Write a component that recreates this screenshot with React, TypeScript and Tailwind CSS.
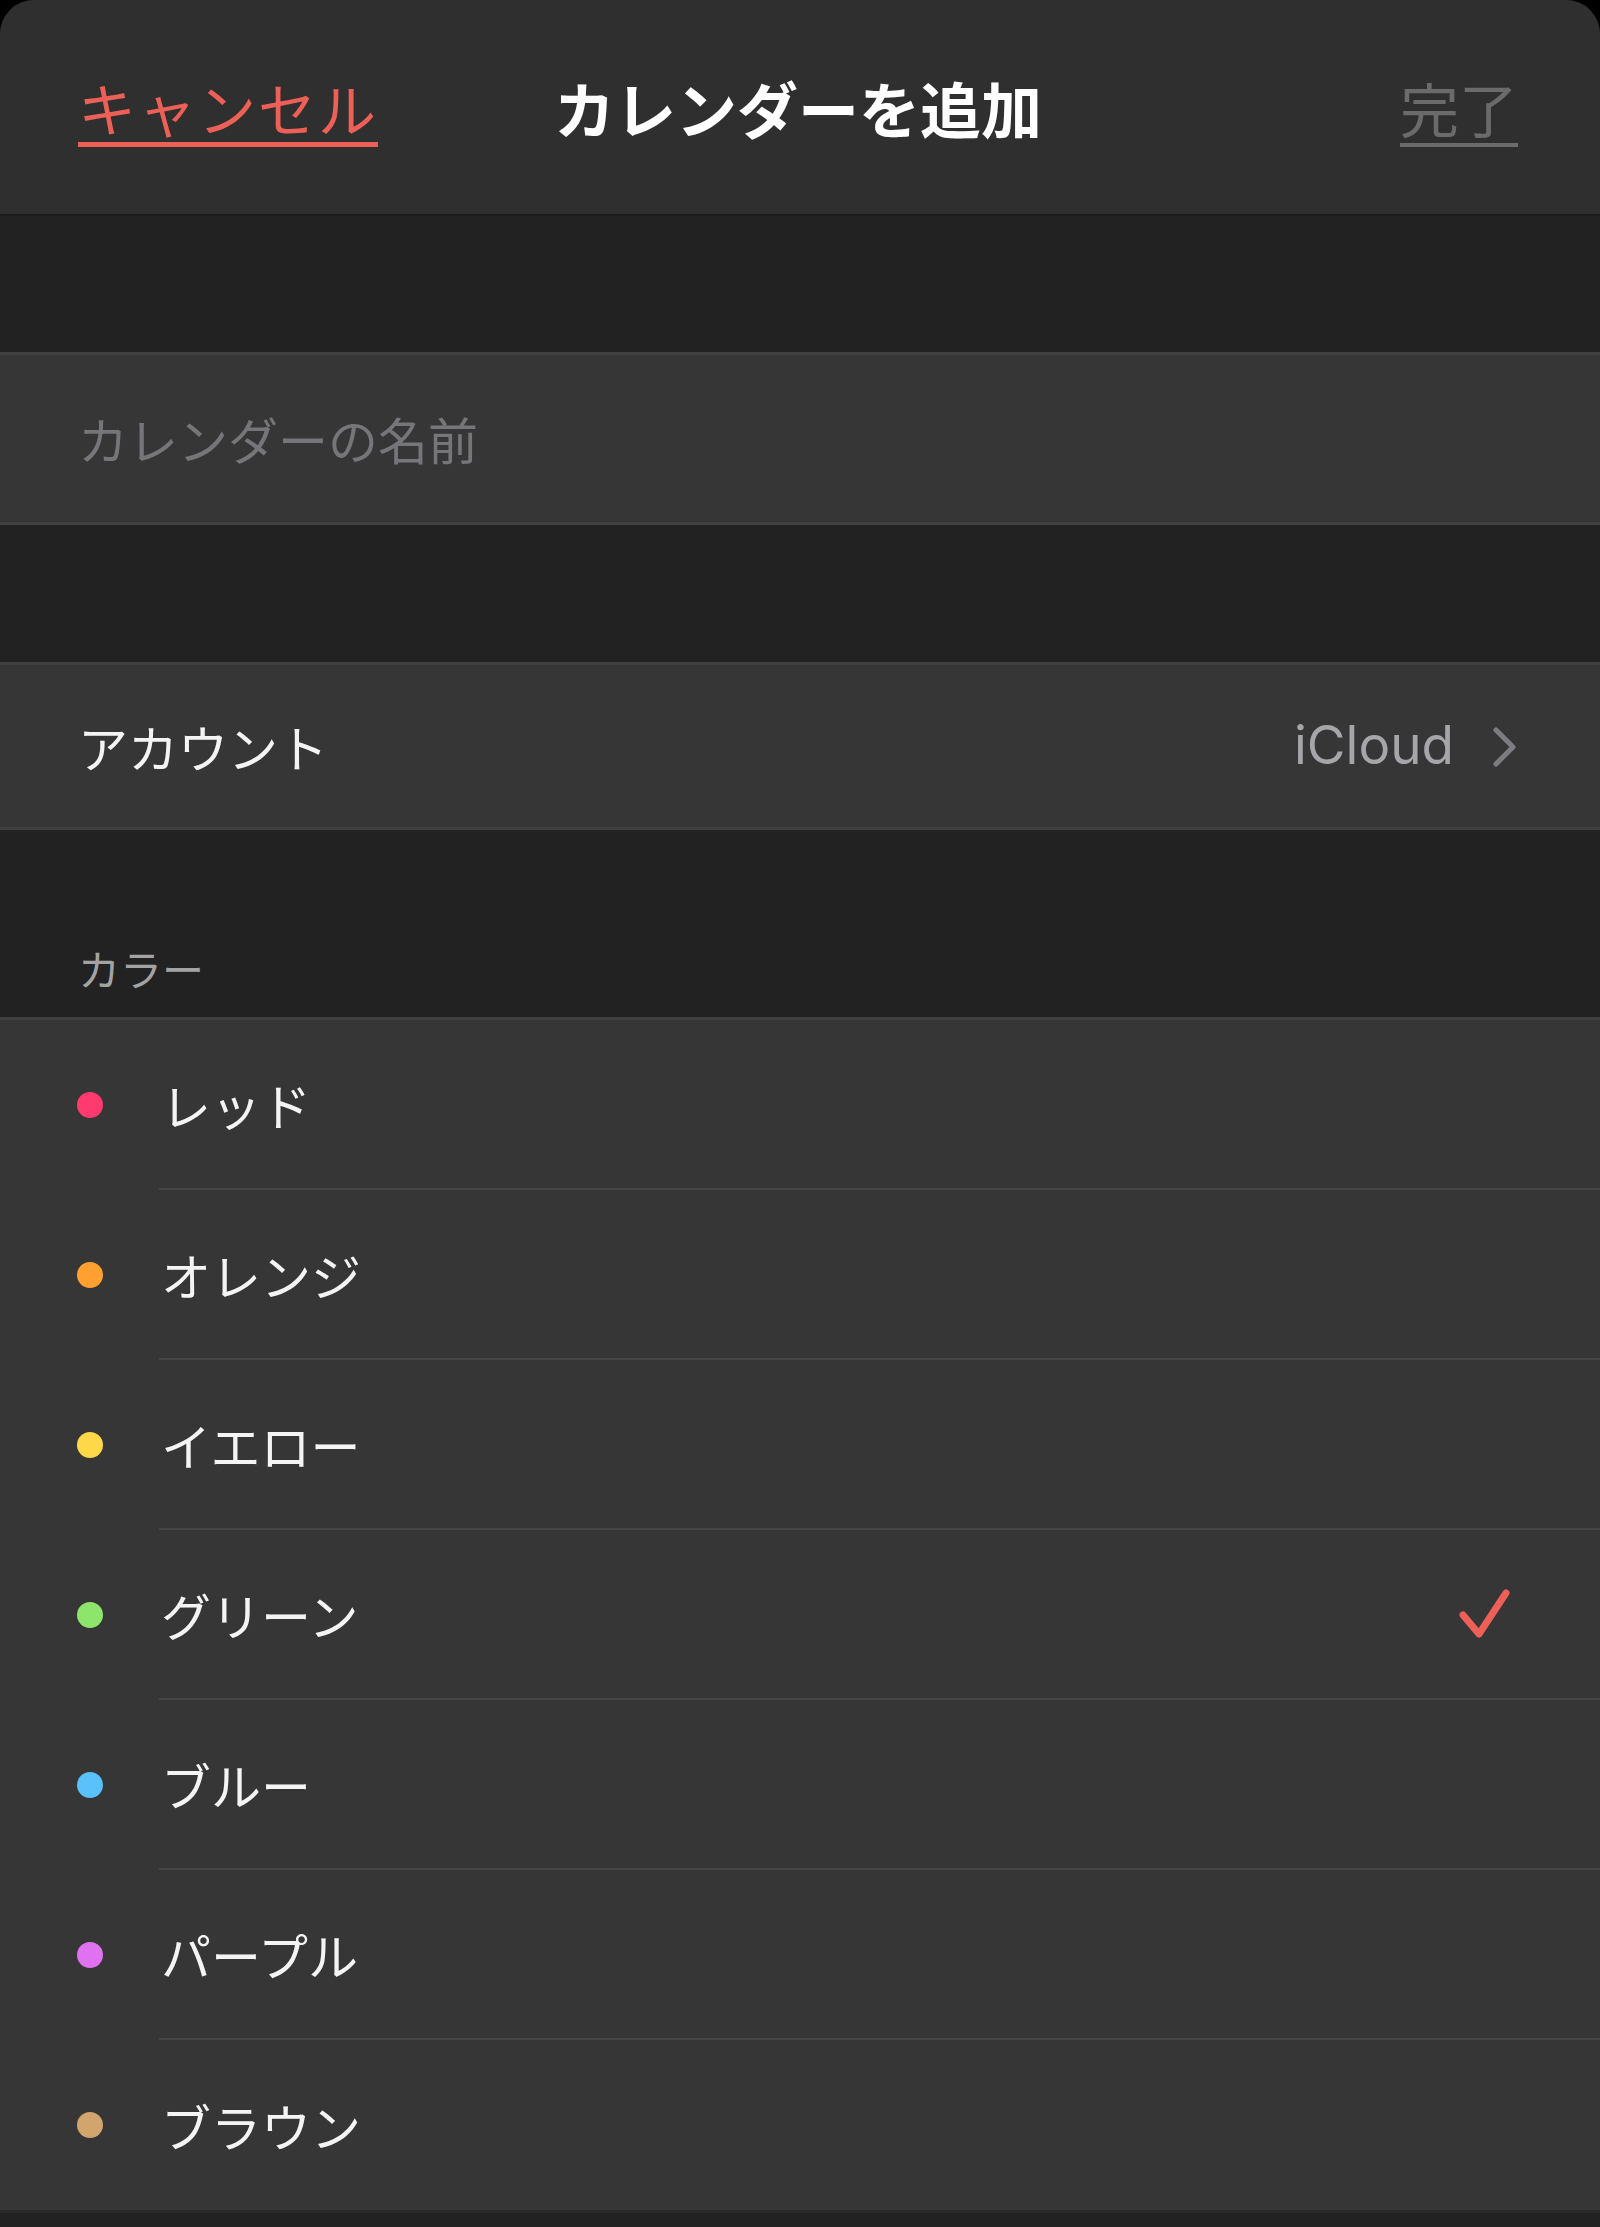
import React from "react";

const colors = [
  { name: "レッド", color: "#ff3a6e" },
  { name: "オレンジ", color: "#ffa030" },
  { name: "イエロー", color: "#ffd84a" },
  { name: "グリーン", color: "#8de56c", checked: true },
  { name: "ブルー", color: "#5ac1fa" },
  { name: "パープル", color: "#e072f2" },
  { name: "ブラウン", color: "#d2a46e" },
];

const jp = { fontFamily: '"Noto Sans CJK JP", "Noto Sans", sans-serif' };

export default function App() {
  return (
    <div className="w-[1600px] h-[2227px] bg-black overflow-hidden" style={jp}>
      <div className="h-full rounded-t-[34px] overflow-hidden bg-[#222222] flex flex-col">
        {/* Header */}
        <div className="h-[216px] shrink-0 bg-[#2f2f2f] border-b-2 border-[#1d1d1d] flex items-center pl-[78px] pr-[82px]">
          <div className="flex-1 flex justify-start">
            <span className="text-[58px] leading-none text-[#ec6058] underline decoration-[5px] underline-offset-[10px] tracking-[2px]">
              キャンセル
            </span>
          </div>
          <span className="text-[61px] leading-none font-bold text-white">
            カレンダーを追加
          </span>
          <div className="flex-1 flex justify-end">
            <span className="text-[59px] leading-none text-[#6b6b6b] underline decoration-[4px] underline-offset-[10px]">
              完了
            </span>
          </div>
        </div>

        {/* gap */}
        <div className="h-[136px] shrink-0 bg-[#222222]" />

        {/* text field */}
        <div className="h-[173px] shrink-0 bg-[#363636] border-y-[3px] border-[#404040] flex items-center px-[78px]">
          <span className="text-[50px] text-[#76767a]">カレンダーの名前</span>
        </div>

        <div className="h-[137px] shrink-0 bg-[#222222]" />

        {/* account */}
        <div className="h-[168px] shrink-0 bg-[#363636] border-y-[3px] border-[#404040] flex items-center justify-between pl-[78px] pr-[82px]">
          <span className="text-[50px] text-[#f4f4f4]">アカウント</span>
          <div className="flex items-center gap-[38px]">
            <span
              className="text-[53px] text-[#a6a6aa]"
              style={{ fontFamily: 'Inter, "Noto Sans", sans-serif' }}
            >
              iCloud
            </span>
            <svg width="26" height="40" viewBox="0 0 26 40" className="mt-[2px]">
              <path
                d="M4 3 L21 20 L4 37"
                fill="none"
                stroke="#7d7d81"
                strokeWidth="5"
                strokeLinecap="round"
                strokeLinejoin="round"
              />
            </svg>
          </div>
        </div>

        {/* section header */}
        <div className="h-[190px] shrink-0 bg-[#222222] flex items-end px-[78px] pb-[18px] border-b-[3px] border-[#404040]">
          <span className="text-[42px] text-[#a3a3a3]">カラー</span>
        </div>

        {/* color rows */}
        <div className="bg-[#363636] flex flex-col">
          {colors.map((c, i) => (
            <div key={c.name} className="h-[170px] flex items-stretch">
              <div className="w-[159px] shrink-0 flex items-center pl-[77px]">
                <span
                  className="block w-[26px] h-[26px] rounded-full"
                  style={{ backgroundColor: c.color }}
                />
              </div>
              <div
                className={
                  "flex-1 flex items-center justify-between pr-[88px] " +
                  (i < colors.length - 1 ? "border-b-2 border-[#464646]" : "")
                }
              >
                <span className="text-[50px] text-[#f4f4f4] ml-[2px]">{c.name}</span>
                {c.checked && (
                  <svg width="54" height="54" viewBox="0 0 54 54">
                    <path
                      d="M5 28 L21 47 L48 6"
                      fill="none"
                      stroke="#ee5f58"
                      strokeWidth="7"
                      strokeLinecap="round"
                      strokeLinejoin="round"
                    />
                  </svg>
                )}
              </div>
            </div>
          ))}
        </div>
        <div className="flex-1 bg-[#222222] border-t-[3px] border-[#2a2a2a]" />
      </div>
    </div>
  );
}
